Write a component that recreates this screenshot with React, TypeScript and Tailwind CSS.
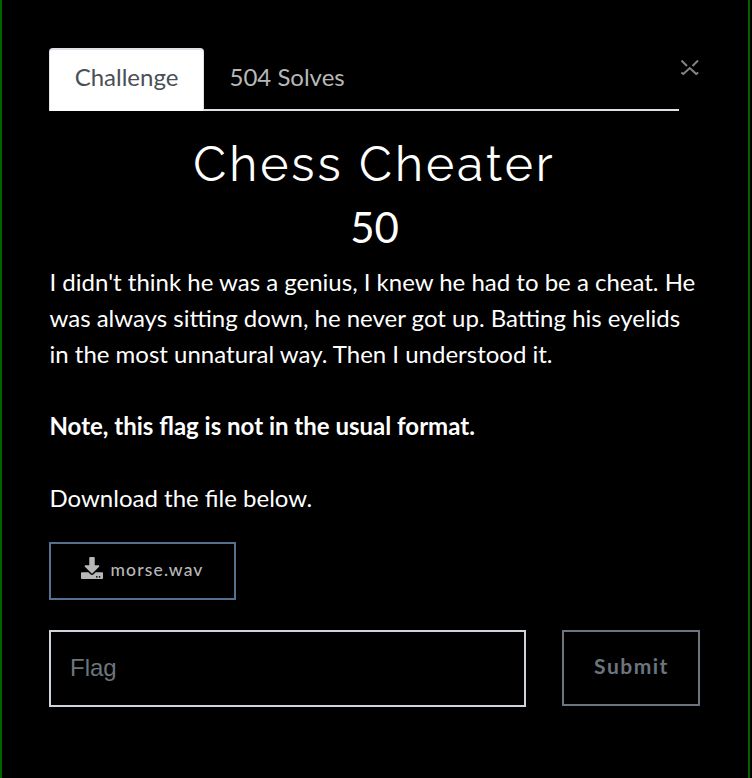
import { FaDownload } from "react-icons/fa";

export default function App() {
  return (
    <div className="h-[778px] w-[752px] bg-black pr-[2px]">
      <div className="h-full border-x-2 border-[#006400] pt-12 pl-[47px] pr-12 font-['Lato',sans-serif] text-2xl leading-9 text-white">
        <div className="flex items-start">
          <div className="flex h-[63px] w-[630px] shrink-0 border-b-2 border-[#dee2e6]">
            <div className="h-[63px] w-[155px] rounded-t-[4px] border-x-[1.5px] border-t-2 border-[#dee2e6] bg-white pt-[9px] text-center text-[#495057]">Challenge</div>
            <div className="pl-[25.5px] pt-[11px] text-[#b8b8b8]">504 Solves</div>
          </div>
          <svg className="mt-3 h-4 w-5 shrink-0" viewBox="0 0 20 16" fill="none" stroke="#858585" strokeWidth="2">
            <path d="M2.5 .5 8 6M19 .5 13.5 6M2.3 12.5 4.3 14 10.8 8 17.2 14 19.2 12.5" />
          </svg>
        </div>
        <h2 className="mt-[23px] text-center font-['Raleway','Lato',sans-serif] text-[48px] leading-[60px] tracking-[3px]">Chess Cheater</h2>
        <h3 className="mt-px text-center text-[42px] leading-[64px]">50</h3>
        <p className="mt-[5px] pl-[0.5px] whitespace-nowrap">I didn't think he was a genius, I knew he had to be a cheat. He<br />was always sitting down, he never got up. Batting his eyelids<br />in the most unnatural way. Then I understood it.</p>
        <p className="mt-9 pl-[0.5px] font-bold">Note, this flag is not in the usual format.</p>
        <p className="mt-9 pl-[0.5px]">Download the file below.</p>
        <button className="mt-[26px] flex h-[58px] w-[187px] items-center border-2 border-[#56718f] pl-[30px] pb-1 text-[17.5px] font-medium tracking-[1.15px] text-[#b8b8b8]">
          <FaDownload className="mr-[7.5px] mb-[2px] size-[22px]" />
          <span className="pt-[2px]">morse.wav</span>
        </button>
        <form className="mt-[30px] flex items-start">
          <input placeholder="Flag" className="h-[77px] w-[477px] border-2 border-[#ced4da] bg-transparent px-[19px] pb-[2px] font-['Liberation_Sans',sans-serif] text-2xl outline-none placeholder:text-[#6c757d]" />
          <button type="button" className="ml-9 h-[76px] w-[138px] border-2 border-[#6c757d] pb-1 pl-px text-[21px] font-bold tracking-[1.5px] text-[#6c757d]">Submit</button>
        </form>
      </div>
    </div>
  );
}
